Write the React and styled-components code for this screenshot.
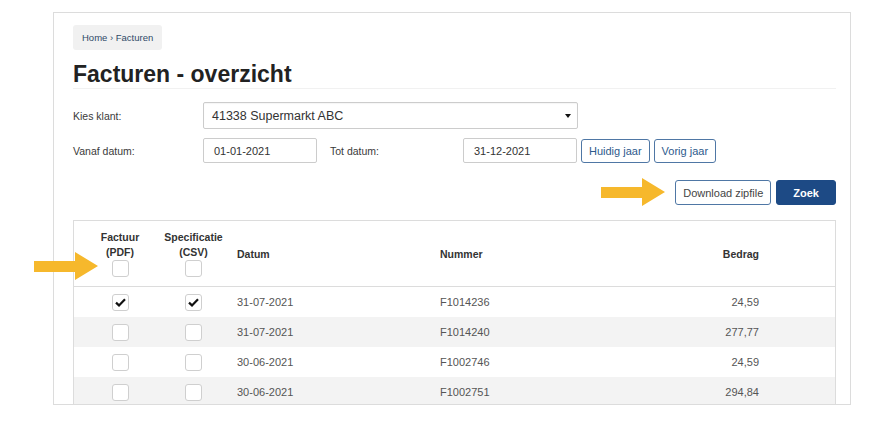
import React from "react";
import styled, { createGlobalStyle } from "styled-components";

const Global = createGlobalStyle`
  html, body { margin: 0; padding: 0; background: #fff; }
  body { font-family: "Liberation Sans", Arial, sans-serif; }
  * { box-sizing: border-box; }
`;

const Page = styled.div`
  position: relative;
  width: 871px;
  height: 427px;
  padding: 12px 20px 0 53px;
  overflow: hidden;
`;

const Panel = styled.div`
  width: 798px;
  height: 393px;
  border: 1px solid #dcdcdc;
  padding: 12px 14px 0 19px;
  overflow: hidden;
  display: flex;
  flex-direction: column;
`;

const Breadcrumb = styled.div`
  align-self: flex-start;
  height: 25px;
  line-height: 25px;
  padding: 0 9px;
  background: #f1f1f1;
  border-radius: 3px;
  font-size: 9.5px;
  color: #2f4a68;
`;

const Title = styled.h1`
  margin: 10px 0 0;
  font-size: 23px;
  line-height: 28px;
  font-weight: bold;
  color: #222;
  border-bottom: 1px solid #f1f1f1;
`;

const FormRow = styled.div`
  display: flex;
  align-items: center;
  margin-top: ${(p) => p.$mt}px;
`;

const Label = styled.label`
  width: ${(p) => p.$w}px;
  flex: none;
  font-size: 10.5px;
  color: #3a3a3a;
  margin-left: ${(p) => p.$ml || 0}px;
`;

const Select = styled.div`
  position: relative;
  width: 375px;
  height: 27px;
  border: 1px solid #ccc;
  border-radius: 2px;
  padding-left: 8px;
  display: flex;
  align-items: center;
  font-size: 12.5px;
  color: #333;
  box-shadow: inset 0 1px 1px rgba(0, 0, 0, 0.04);
`;

const Caret = styled.span`
  position: absolute;
  right: 6px;
  top: 11px;
  width: 0;
  height: 0;
  border-left: 3px solid transparent;
  border-right: 3px solid transparent;
  border-top: 4px solid #111;
`;

const Input = styled.div`
  width: 114px;
  height: 25px;
  border: 1px solid #ccc;
  border-radius: 2px;
  padding-left: 10px;
  display: flex;
  align-items: center;
  font-size: 11px;
  color: #333;
  flex: none;
`;

const Button = styled.button`
  height: ${(p) => p.$h || 24}px;
  padding: 0 ${(p) => p.$px || 7}px;
  margin-left: ${(p) => p.$ml || 0}px;
  border: 1px solid ${(p) => (p.$primary ? "#1d4a85" : "#4f77a5")};
  border-radius: 3px;
  background: ${(p) => (p.$primary ? "#1d4a85" : "#fff")};
  color: ${(p) => (p.$primary ? "#fff" : p.$dark ? "#444" : "#2d5a8c")};
  font-family: "Liberation Sans", Arial, sans-serif;
  font-size: 11px;
  font-weight: ${(p) => (p.$primary ? "bold" : "normal")};
  cursor: pointer;
  flex: none;
`;

const Actions = styled.div`
  display: flex;
  justify-content: flex-end;
  gap: 5px;
  margin-top: 17px;
`;

const Table = styled.div`
  margin-top: 15px;
  border: 1px solid #dcdcdc;
  display: grid;
  grid-template-columns: 92px 55px 203px 1fr 150px;
`;

const HeadCell = styled.div`
  height: 66px;
  border-bottom: 1px solid #dcdcdc;
  display: flex;
  align-items: center;
  justify-content: ${(p) => (p.$right ? "flex-end" : "flex-start")};
  padding: 0 ${(p) => (p.$right ? 76 : 0)}px 0 ${(p) => (p.$right ? 0 : 16)}px;
  font-size: 10.5px;
  font-weight: bold;
  color: #333;
`;

const HeadCheckCell = styled.div`
  height: 66px;
  border-bottom: 1px solid #dcdcdc;
  display: flex;
  flex-direction: column;
  align-items: center;
  padding-top: 9px;
  font-size: 10.5px;
  line-height: 15px;
  font-weight: bold;
  color: #333;
  text-align: center;
`;

const Cell = styled.div`
  height: 30px;
  display: flex;
  align-items: center;
  justify-content: ${(p) => (p.$center ? "center" : p.$right ? "flex-end" : "flex-start")};
  padding: 0 ${(p) => (p.$right ? 76 : 0)}px 0 ${(p) => (p.$center || p.$right ? 0 : 16)}px;
  background: ${(p) => (p.$alt ? "#f3f3f3" : "#fff")};
  font-size: 11px;
  color: #555;
`;

const Box = styled.span`
  width: 17px;
  height: 17px;
  border: 1px solid #cfcfcf;
  border-radius: 3px;
  background: #fff;
  display: flex;
  align-items: center;
  justify-content: center;
  margin-top: ${(p) => p.$mt || 0}px;
`;

const Arrow = styled.svg`
  position: absolute;
  left: ${(p) => p.$x}px;
  top: ${(p) => p.$y}px;
`;

const Check = ({ checked, mt }) => (
  <Box $mt={mt}>
    {checked && (
      <svg width="11" height="9" viewBox="0 0 11 9">
        <path d="M1 4.6 L4 7.4 L10 1.2" fill="none" stroke="#111" strokeWidth="2.2" />
      </svg>
    )}
  </Box>
);

const ArrowShape = ({ x, y }) => (
  <Arrow $x={x} $y={y} width="64" height="28" viewBox="0 0 64 28">
    <polygon points="0,9 41,9 41,0 64,14 41,28 41,20 0,20" fill="#f6b82c" />
  </Arrow>
);

const rows = [
  { c1: true, c2: true, d: "31-07-2021", n: "F1014236", b: "24,59" },
  { c1: false, c2: false, d: "31-07-2021", n: "F1014240", b: "277,77" },
  { c1: false, c2: false, d: "30-06-2021", n: "F1002746", b: "24,59" },
  { c1: false, c2: false, d: "30-06-2021", n: "F1002751", b: "294,84" },
];

export default function App() {
  return (
    <>
      <Global />
      <Page>
        <Panel>
          <Breadcrumb>Home › Facturen</Breadcrumb>
          <Title>Facturen - overzicht</Title>
          <FormRow $mt={13}>
            <Label $w={130}>Kies klant:</Label>
            <Select>
              41338 Supermarkt ABC
              <Caret />
            </Select>
          </FormRow>
          <FormRow $mt={9}>
            <Label $w={130}>Vanaf datum:</Label>
            <Input>01-01-2021</Input>
            <Label $w={133} $ml={13}>Tot datum:</Label>
            <Input>31-12-2021</Input>
            <Button $ml={4}>Huidig jaar</Button>
            <Button $ml={4}>Vorig jaar</Button>
          </FormRow>
          <Actions>
            <Button $h={25} $px={7} $dark>Download zipfile</Button>
            <Button $h={25} $px={16} $primary>Zoek</Button>
          </Actions>
          <Table>
            <HeadCheckCell>
              Factuur
              <br />
              (PDF)
              <Check mt={0} />
            </HeadCheckCell>
            <HeadCheckCell>
              Specificatie
              <br />
              (CSV)
              <Check mt={0} />
            </HeadCheckCell>
            <HeadCell>Datum</HeadCell>
            <HeadCell>Nummer</HeadCell>
            <HeadCell $right>Bedrag</HeadCell>
            {rows.map((r, i) => {
              const alt = i % 2 === 1;
              return (
                <React.Fragment key={i}>
                  <Cell $alt={alt} $center>
                    <Check checked={r.c1} />
                  </Cell>
                  <Cell $alt={alt} $center>
                    <Check checked={r.c2} />
                  </Cell>
                  <Cell $alt={alt}>{r.d}</Cell>
                  <Cell $alt={alt}>{r.n}</Cell>
                  <Cell $alt={alt} $right>{r.b}</Cell>
                </React.Fragment>
              );
            })}
          </Table>
        </Panel>
        <ArrowShape x={601} y={178} />
        <ArrowShape x={34} y={252} />
      </Page>
    </>
  );
}
